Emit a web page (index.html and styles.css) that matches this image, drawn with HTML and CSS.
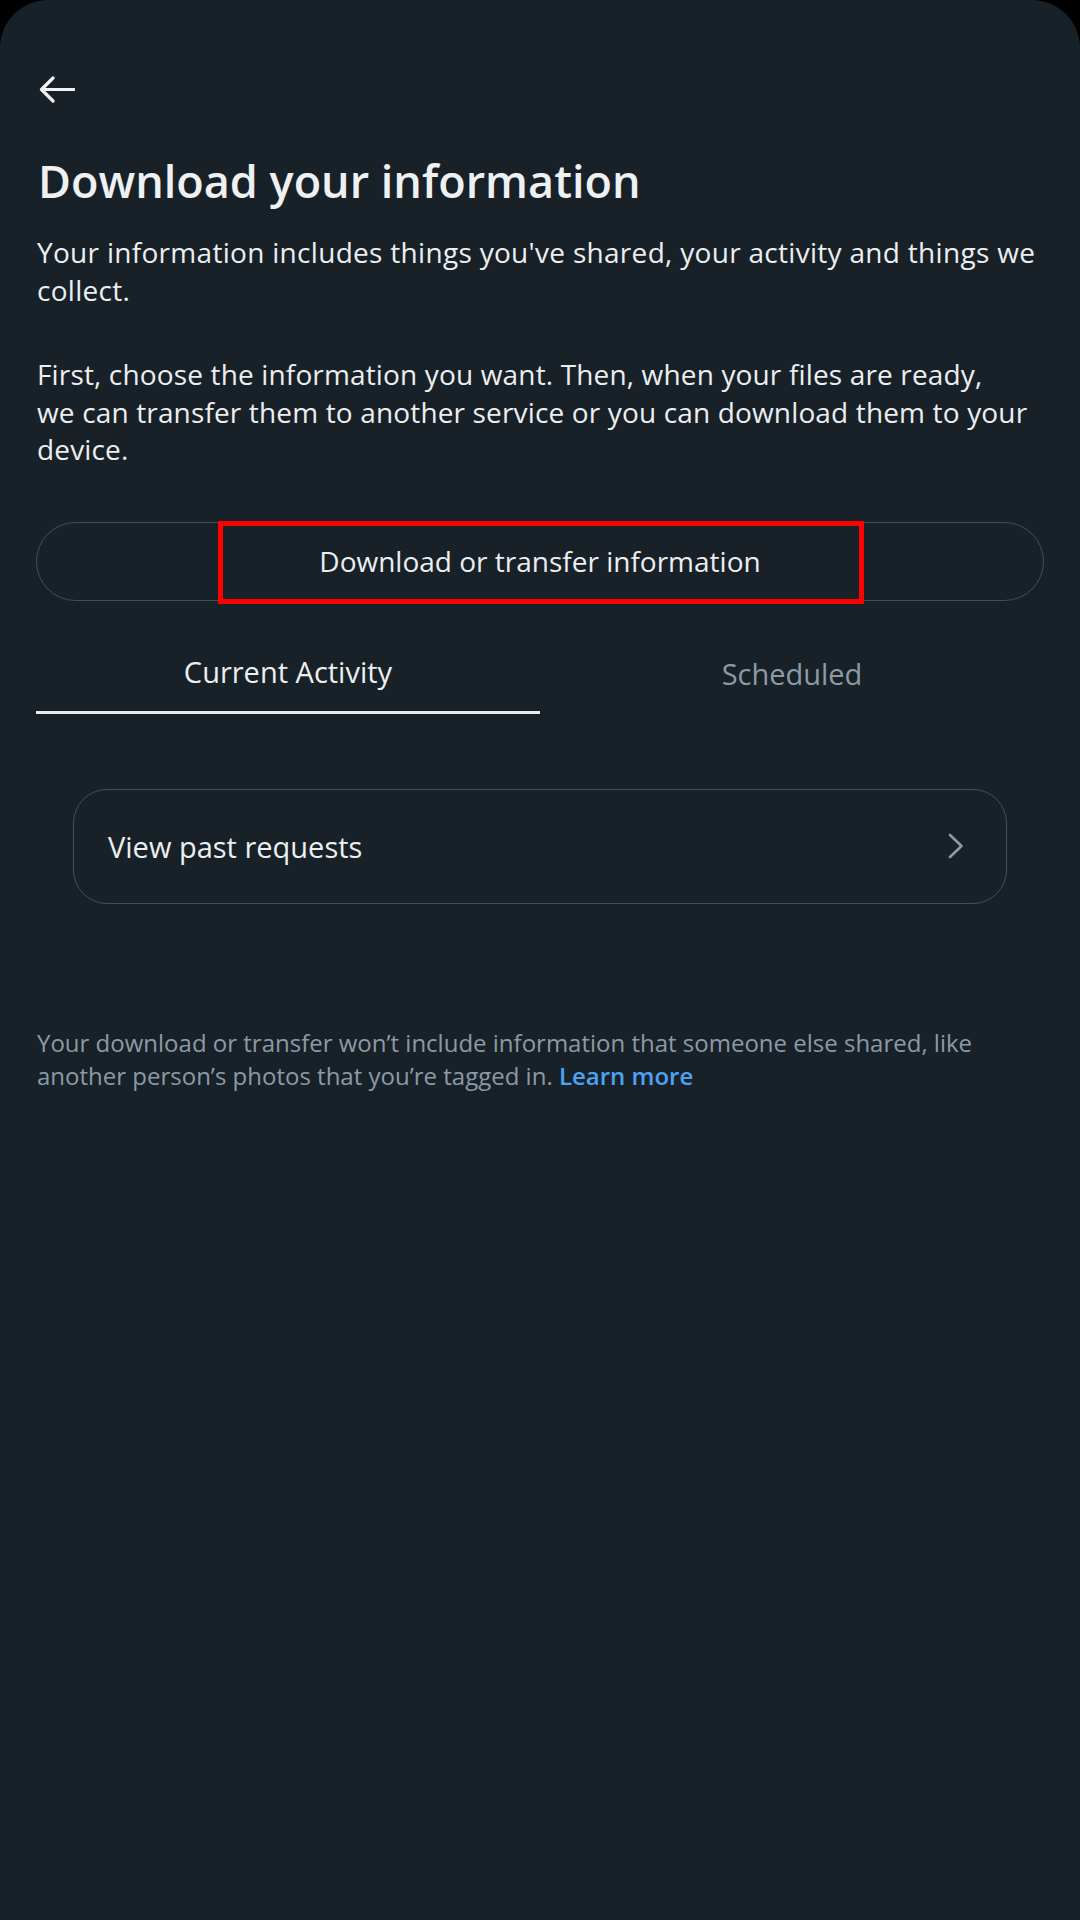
FILE: index.html
```html
<!DOCTYPE html>
<html lang="en">
<head>
<meta charset="utf-8">
<title>Download your information</title>
<link rel="stylesheet" href="styles.css">
</head>
<body>
<div class="screen">
  <div class="topbar">
    <svg class="back" width="36" height="28" viewBox="0 0 36 28" aria-label="Back">
      <path d="M35 13.5H3M14 2L2.5 13.5L14 25" fill="none" stroke="#f1f3f5" stroke-width="3.2" stroke-linecap="round" stroke-linejoin="round"/>
    </svg>
  </div>
  <h1 class="title">Download your information</h1>
  <p class="para">Your information includes things you've shared, your activity and things we collect.</p>
  <p class="para para-second">First, choose the information you want. Then, when your files are ready,<br>we can transfer them to another service or you can download them to your device.</p>
  <div class="btn">
    <span class="btn-label">Download or transfer information</span>
    <span class="highlight"></span>
  </div>
  <div class="tabs">
    <div class="tab tab-active">Current Activity</div>
    <div class="tab">Scheduled</div>
  </div>
  <div class="card">
    <span class="card-label">View past requests</span>
    <svg class="chev" width="16" height="26" viewBox="0 0 16 26">
      <path d="M2 2L13.5 13L2 24" fill="none" stroke="#8d9aa6" stroke-width="2.6" stroke-linecap="round" stroke-linejoin="round"/>
    </svg>
  </div>
  <p class="note">Your download or transfer won’t include information that someone else shared, like another person’s photos that you’re tagged in. <a class="link" href="#">Learn more</a></p>
</div>
</body>
</html>
```
FILE: styles.css
```css
html, body {
  margin: 0;
  padding: 0;
  background: #000;
}
body {
  font-family: "Open Sans", "Noto Sans", "Liberation Sans", sans-serif;
  color: #e9ecef;
}
.screen {
  min-height: 1920px;
  box-sizing: border-box;
  background: #182128;
  border-radius: 48px 48px 0 0;
  padding: 0 36px;
}
.topbar {
  padding-top: 76px;
  padding-left: 3px;
  height: 28px;
}
.back {
  display: block;
}
.title {
  margin: 51px 0 0 2px;
  font-size: 45px;
  line-height: 52px;
  font-weight: 600;
  color: #eef0f2;
}
.para {
  margin: 27px 0 0 1px;
  font-size: 28px;
  line-height: 37.5px;
  letter-spacing: 0.3px;
  color: #eceef0;
}
.para-second {
  margin-top: 47px;
  letter-spacing: 0.15px;
}
.btn {
  position: relative;
  margin-top: 53px;
  height: 79px;
  box-sizing: border-box;
  border: 1.5px solid #3f505d;
  border-radius: 40px;
  display: flex;
  align-items: center;
  justify-content: center;
}
.btn-label {
  font-size: 28px;
  color: #eceef0;
}
.highlight {
  position: absolute;
  left: 181px;
  top: -2px;
  width: 646px;
  height: 83px;
  box-sizing: border-box;
  border: 5px solid #ff0000;
}
.tabs {
  margin-top: 33px;
  display: flex;
}
.tab {
  flex: 1;
  height: 80px;
  box-sizing: border-box;
  display: flex;
  align-items: center;
  justify-content: center;
  font-size: 29px;
  color: #8c9aa5;
  padding-bottom: 1px;
}
.tab-active {
  color: #eceef0;
  border-bottom: 3px solid #e9ecef;
}
.card {
  margin: 75px 37px 0;
  height: 115px;
  box-sizing: border-box;
  border: 1.5px solid #3f505d;
  border-radius: 34px;
  display: flex;
  align-items: center;
  justify-content: space-between;
  padding: 0 42px 0 34px;
}
.card-label {
  font-size: 29px;
  color: #eceef0;
}
.chev {
  display: block;
}
.note {
  margin: 122px 0 0 1px;
  font-size: 24px;
  line-height: 33px;
  color: #8c9aa6;
}
.link {
  color: #4ba3f3;
  font-weight: 600;
  text-decoration: none;
}
```
